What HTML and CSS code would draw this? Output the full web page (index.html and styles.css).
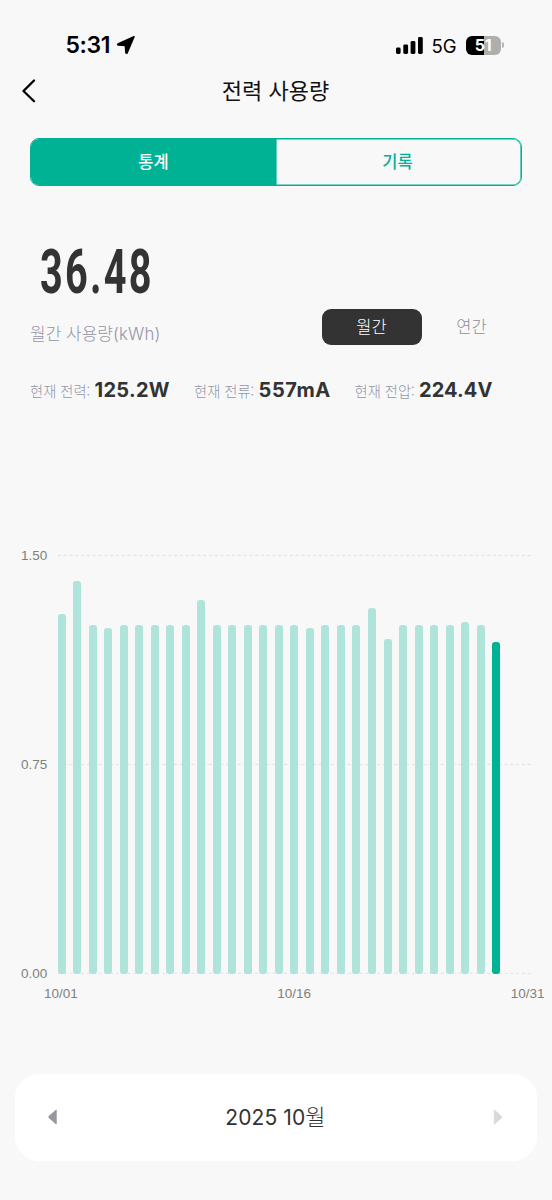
FILE: index.html
```html
<!DOCTYPE html>
<html lang="ko">
<head>
<meta charset="utf-8">
<title>전력 사용량</title>
<link rel="stylesheet" href="styles.css">
</head>
<body>
<div class="screen">
  <div class="status">
    <span class="clock">5:31</span>
    <svg class="location" width="18" height="18" viewBox="0 0 18 18"><path d="M17 .8 1 7.9Q.4 8.6 1.2 9L8.3 9.5 8.9 16.7Q9.4 17.7 10.1 16.9Z" fill="#000" stroke="#000" stroke-width="1.5" stroke-linejoin="round"/></svg>
    <svg class="signal" width="28" height="17" viewBox="0 0 28 17"><rect x="0" y="10.5" width="4.6" height="6.5" rx="1.4"/><rect x="7.3" y="7.5" width="4.8" height="9.5" rx="1.4"/><rect x="14.6" y="4" width="4.8" height="13" rx="1.4"/><rect x="22" y="0" width="4.8" height="17" rx="1.4"/></svg>
    <span class="network">5G</span>
    <div class="battery">51</div>
    <span class="battery-cap"></span>
  </div>
  <header class="header">
    <svg class="back" width="14" height="24" viewBox="0 0 14 24"><path d="M12 1.5 1.5 12 12 22.2" fill="none" stroke="#000" stroke-width="2.3" stroke-linecap="round" stroke-linejoin="round"/></svg>
    <h1 class="title">전력 사용량</h1>
  </header>
  <div class="tabs"><div class="tab tab-active">통계</div><div class="tab tab-idle">기록</div></div>
  <section class="summary">
    <div class="total">
      <div class="amount">36.48</div>
      <div class="caption">월간 사용량<span class="unit">(kWh)</span></div>
    </div>
    <div class="periods"><div class="period period-active">월간</div><div class="period">연간</div></div>
  </section>
  <div class="readings">
    <div class="reading reading-power"><span>현재 전력:</span><b>125.2W</b></div>
    <div class="reading reading-current"><span>현재 전류:</span><b class="current">557mA</b></div>
    <div class="reading"><span>현재 전압:</span><b class="voltage">224.4V</b></div>
  </div>
  <section class="chart">
    <div class="y-axis"><span>1.50</span><span>0.75</span><span>0.00</span></div>
    <div class="plot">
      <svg class="gridlines" width="474" height="420" viewBox="0 0 474 420"><path d="M0 1.5H474M0 210.5H474M0 419.5H474" stroke="#e6e6e6" stroke-width="1.4" stroke-dasharray="3 2.8" fill="none"/></svg>
      <div class="bars">
        <i style="height:360px"></i><i style="height:393.3px"></i><i style="height:349px"></i><i style="height:346px"></i><i style="height:349px"></i><i style="height:349px"></i><i style="height:349px"></i><i style="height:349px"></i><i style="height:349px"></i><i style="height:374px"></i><i style="height:349px"></i><i style="height:349px"></i><i style="height:349px"></i><i style="height:349px"></i><i style="height:349px"></i><i style="height:349px"></i><i style="height:346px"></i><i style="height:349px"></i><i style="height:349px"></i><i style="height:349px"></i><i style="height:365.6px"></i><i style="height:335px"></i><i style="height:349px"></i><i style="height:349px"></i><i style="height:349px"></i><i style="height:349px"></i><i style="height:351.6px"></i><i style="height:349px"></i><i class="today" style="height:332px"></i>
      </div>
    </div>
  </section>
  <div class="x-axis"><span>10/01</span><span>10/16</span><span>10/31</span></div>
  <nav class="month">
    <svg width="10" height="16" viewBox="0 0 10 16"><path d="M8.2 1V15L1 8.7Q.4 8 1 7.3Z" fill="#97979d" stroke="#97979d" stroke-width="1" stroke-linejoin="round"/></svg>
    <div class="month-name">2025 10<span class="month-unit">월</span></div>
    <svg width="10" height="16" viewBox="0 0 10 16"><path d="M1.3 1V15L8.5 8.7Q9 8 8.5 7.3Z" fill="#d9d9db" stroke="#d9d9db" stroke-width="1" stroke-linejoin="round"/></svg>
  </nav>
</div>
</body>
</html>
```
FILE: styles.css
```css
* { box-sizing: border-box; }
body { margin: 0; background: #f8f8f8; font-family: Inter, "Noto Sans CJK KR", sans-serif; color: #333; }
.screen { width: 552px; height: 1200px; overflow: hidden; }
.status { display: flex; align-items: center; height: 60px; padding: 30px 48px 0 65.5px; color: #000; }
.clock { width: 51.5px; font-size: 23px; font-weight: 600; letter-spacing: -0.4px; line-height: 30px; white-space: nowrap; flex: none; }
.location { margin-right: 261px; flex: none; }
.signal { flex: none; }
.network { width: 34px; margin-left: 7.5px; padding-top: 1px; font-size: 18.5px; flex: none; }
.battery { width: 35px; height: 19px; flex: none; border-radius: 6px; background: linear-gradient(90deg, #000 51%, #aeaeae 51%); color: #fff; font-size: 16px; font-weight: 700; line-height: 19px; text-align: center; letter-spacing: -0.4px; }
.battery-cap { width: 2px; height: 6px; margin-left: 1px; flex: none; border-radius: 0 2px 2px 0; background: #b5b5b5; }
.header { display: grid; grid-template-columns: 36px 1fr 36px; align-items: center; height: 62px; }
.back { margin-left: 21.5px; }
.title { margin: 0; padding-bottom: 5px; text-align: center; text-indent: -1px; font-family: "Noto Sans CJK KR", sans-serif; font-size: 22px; font-weight: 400; line-height: 32px; color: #111; }
.tabs { display: flex; margin: 16px 30px 0; height: 48px; border: 1px solid #00b294; border-radius: 9px; overflow: hidden; }
.tab { flex: 1; text-align: center; font-family: "Noto Sans CJK KR", sans-serif; font-size: 16.5px; font-weight: 500; line-height: 45px; color: #00b294; }
.tab-active { color: #fff; background: #00b294; }
.tab-idle { border-radius: 0 8px 8px 0; box-shadow: inset 0 0 0 0.6px #00b294; text-indent: -2px; }
.summary { display: flex; justify-content: space-between; height: 164px; padding: 53px 30px 0; }
.total { width: 180px; }
.amount { width: 170px; margin-left: 10px; font-family: Roboto, sans-serif; font-size: 61px; line-height: 66px; font-weight: 700; letter-spacing: 3.5px; transform: scaleX(.65); transform-origin: left center; }
.caption { margin-top: 16px; font-family: "Noto Sans CJK KR", sans-serif; font-size: 17px; font-weight: 300; line-height: 24px; color: #9595a5; white-space: nowrap; }
.unit { font-family: Inter, sans-serif; font-size: 16.8px; font-weight: 300; letter-spacing: 0.2px; }
.periods { display: flex; margin-top: 70px; }
.period { width: 100px; height: 36px; border-radius: 9px; text-align: center; font-family: "Noto Sans CJK KR", sans-serif; font-size: 16.5px; font-weight: 300; line-height: 34px; text-indent: -1px; color: #8e8e94; }
.period-active { background: #333; color: #fff; }
.readings { display: flex; height: 80px; padding: 25px 0 0 30px; }
.reading { display: flex; align-items: baseline; height: 30px; line-height: 30px; white-space: nowrap; }
.reading span { width: 64.5px; font-family: "Noto Sans CJK KR", sans-serif; font-size: 14.3px; font-weight: 300; color: #9595a5; }
.reading b { font-size: 20px; font-weight: 700; letter-spacing: 0.3px; }
.reading .current { letter-spacing: 0.6px; }
.reading .voltage { letter-spacing: 0.1px; }
.reading-power { width: 164px; }
.reading-current { width: 160.5px; }
.chart { display: flex; margin-top: 124px; height: 420px; font-family: "Liberation Sans", Arial, sans-serif; font-size: 13.5px; color: #7f7f7f; }
.y-axis { display: flex; flex-direction: column; justify-content: space-between; width: 57.7px; height: 434px; margin-top: -6px; padding-left: 21px; line-height: 16px; }
.plot { display: grid; width: 474px; height: 420px; }
.gridlines, .bars { grid-area: 1 / 1; }
.bars { display: flex; align-items: flex-end; gap: 7.53px; height: 420px; }
.bars i { width: 8px; border-radius: 3px; background: #aee4d9; }
.bars .today { background: #00b294; }
.x-axis { display: flex; justify-content: space-between; padding: 11px 7.5px 0 44px; font-family: "Liberation Sans", Arial, sans-serif; font-size: 13.5px; line-height: 18px; color: #7f7f7f; }
.month { display: flex; align-items: center; justify-content: space-between; height: 87px; margin: 71px 15px 0; padding: 0 34px 2px 33px; border-radius: 24px; background: #fff; }
.month-name { font-size: 21px; line-height: 30px; letter-spacing: 0.1px; }
.month-unit { font-family: "Noto Sans CJK KR", sans-serif; font-size: 22px; font-weight: 300; }
```
